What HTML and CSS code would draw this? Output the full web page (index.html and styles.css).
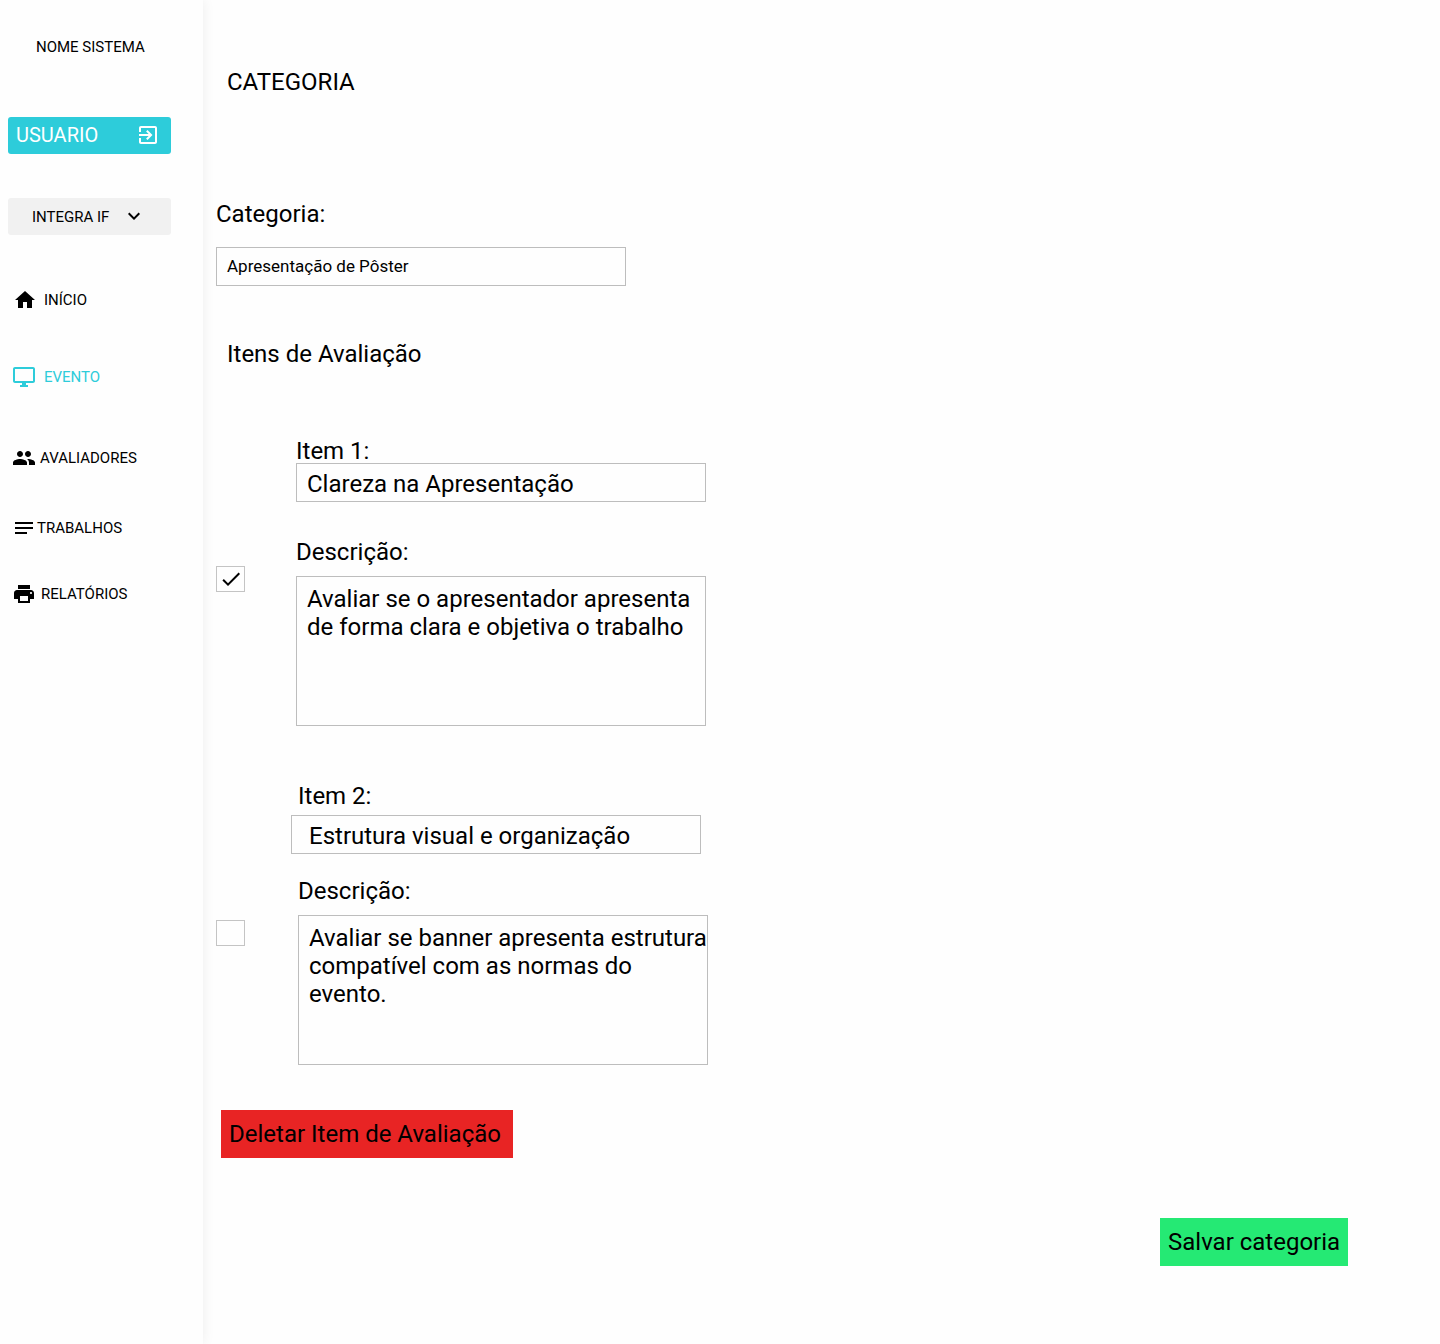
FILE: index.html
```html
<!DOCTYPE html>
<html lang="pt-BR">
<head>
<meta charset="utf-8">
<title>Categoria</title>
<link rel="stylesheet" href="styles.css">
</head>
<body>
<div class="app">
  <aside class="sidebar">
    <div class="brand"><span>NOME SISTEMA</span></div>
    <div class="user"><span class="user-name">USUARIO</span>
      <svg class="icon" viewBox="0 0 24 24"><path d="M10.09 15.59L11.5 17l5-5-5-5-1.41 1.41L12.67 11H3v2h9.67l-2.58 2.59zM19 3H5c-1.11 0-2 .9-2 2v4h2V5h14v14H5v-4H3v4c0 1.1.89 2 2 2h14c1.1 0 2-.9 2-2V5c0-1.1-.9-2-2-2z"/></svg>
    </div>
    <div class="event-select"><span>INTEGRA IF</span>
      <svg class="icon" viewBox="0 0 24 24"><path d="M16.59 8.59L12 13.17 7.41 8.59 6 10l6 6 6-6z"/></svg>
    </div>
    <nav class="menu">
      <a class="link home"><svg class="icon" viewBox="0 0 24 24"><path d="M10 20v-6h4v6h5v-8h3L12 3 2 12h3v8z"/></svg><span>INÍCIO</span></a>
      <a class="link event"><svg class="icon" viewBox="0 0 24 24"><path d="M21 2H3c-1.1 0-2 .9-2 2v12c0 1.1.9 2 2 2h7v2H8v2h8v-2h-2v-2h7c1.1 0 2-.9 2-2V4c0-1.1-.9-2-2-2zm0 14H3V4h18v12z"/></svg><span>EVENTO</span></a>
      <a class="link reviewers"><svg class="icon" viewBox="0 0 24 24"><path d="M16 11c1.66 0 2.99-1.34 2.99-3S17.66 5 16 5c-1.66 0-3 1.34-3 3s1.34 3 3 3zm-8 0c1.66 0 2.99-1.34 2.99-3S9.66 5 8 5C6.34 5 5 6.34 5 8s1.34 3 3 3zm0 2c-2.33 0-7 1.17-7 3.5V19h14v-2.5c0-2.33-4.67-3.5-7-3.5zm8 0c-.29 0-.62.02-.97.05 1.16.84 1.97 1.97 1.97 3.45V19h6v-2.5c0-2.33-4.67-3.5-7-3.5z"/></svg><span>AVALIADORES</span></a>
      <a class="link works"><svg class="icon" viewBox="0 0 24 24"><path d="M3 18h12v-2H3v2zM3 6v2h18V6H3zm0 7h18v-2H3v2z"/></svg><span>TRABALHOS</span></a>
      <a class="link reports"><svg class="icon" viewBox="0 0 24 24"><path d="M19 8H5c-1.66 0-3 1.34-3 3v6h4v4h12v-4h4v-6c0-1.66-1.34-3-3-3zm-3 11H8v-5h8v5zm3-7c-.55 0-1-.45-1-1s.45-1 1-1 1 .45 1 1-.45 1-1 1zm-1-9H6v4h12V3z"/></svg><span>RELATÓRIOS</span></a>
    </nav>
  </aside>
  <main class="content">
    <h1 class="title"><span>CATEGORIA</span></h1>
    <div class="label"><span>Categoria:</span></div>
    <div class="field category"><span>Apresentação de Pôster</span></div>
    <h2 class="subtitle"><span>Itens de Avaliação</span></h2>
    <section class="item first">
      <div class="check"><svg class="icon" viewBox="0 0 24 24"><path d="M9 16.17L4.83 12l-1.42 1.41L9 19 21 7l-1.41-1.41z"/></svg></div>
      <div class="item-body">
        <div class="label"><span>Item 1:</span></div>
        <div class="field name"><span>Clareza na Apresentação</span></div>
        <div class="label desc"><span>Descrição:</span></div>
        <div class="area">Avaliar se o apresentador apresenta<br>de forma clara e objetiva o trabalho</div>
      </div>
    </section>
    <section class="item second">
      <div class="check"></div>
      <div class="item-body">
        <div class="label"><span>Item 2:</span></div>
        <div class="field name"><span>Estrutura visual e organização</span></div>
        <div class="label desc"><span>Descrição:</span></div>
        <div class="area">Avaliar se banner apresenta estrutura<br>compatível com as normas do<br>evento.</div>
      </div>
    </section>
    <div class="btn delete"><span>Deletar Item de Avaliação</span></div>
    <div class="btn save"><span>Salvar categoria</span></div>
  </main>
</div>
</body>
</html>
```
FILE: styles.css
```css
* { box-sizing: border-box; }
body { margin: 0; background: #fefefe; color: #000; font: 24px/28px Roboto, sans-serif; }
.app { display: flex; height: 1344px; overflow: hidden; }
.icon { display: block; flex: none; width: 24px; height: 24px; fill: currentColor; }

.sidebar { flex: none; width: 203px; padding: 38px 0 0 8px; background: #fefefe; box-shadow: 0 0 12px rgba(0, 0, 0, .07); font-size: 15px; line-height: 18px; }
.brand { padding-left: 28px; }
.user, .event-select { display: flex; width: 163px; height: 37px; border-radius: 3px; }
.user { justify-content: space-between; margin-top: 61px; padding: 6px 11px 0 8px; background: #2dccda; color: #fff; }
.user-name { font-size: 20px; line-height: 24px; }
.event-select { justify-content: space-between; margin-top: 44px; padding: 6px 25px 0 24px; background: #f1f1f1; }
.event-select span { padding-top: 4px; }
.menu { display: flex; flex-direction: column; padding-top: 53px; }
.link { display: flex; align-items: center; height: 24px; padding-left: 4px; }
.home { gap: 7px; padding-left: 5px; }
.event { gap: 8px; margin-top: 53px; color: #2dccda; }
.reviewers { gap: 4px; margin-top: 57px; }
.works { gap: 1px; margin-top: 46px; }
.reports { gap: 5px; margin-top: 42px; }

.content { flex: 1; display: flex; flex-direction: column; align-items: flex-start; padding: 68px 92px 0 13px; }
.title, .subtitle { margin: 0 0 0 11px; font-size: 24px; font-weight: 400; }
.title { margin-bottom: 104px; }
.label { height: 28px; white-space: nowrap; }
.field { display: flex; width: 410px; height: 39px; padding: 6px 0 0 10px; border: 1px solid #bdbdbd; white-space: nowrap; }
.category { margin: 19px 0 54px; padding-top: 4px; font-size: 17px; }
.item { display: flex; }
.check { flex: none; width: 29px; height: 26px; padding-left: 2px; border: 1px solid #c4c4c4; }
.area { width: 410px; height: 150px; padding: 8px 0 0 10px; border: 1px solid #bdbdbd; white-space: nowrap; }
.first { margin-top: 69px; gap: 51px; }
.first .check { margin-top: 129px; }
.first .field { margin: -2px 0 36px; }
.first .area { margin-top: 10px; }
.second { margin-top: 56px; gap: 53px; }
.second .check { margin-top: 138px; }
.second .field { margin: 5px 0 23px -7px; padding-left: 17px; }
.second .area { margin-top: 10px; }
.btn { height: 48px; padding: 10px 8px 0; white-space: nowrap; }
.delete { width: 292px; margin: 45px 0 0 5px; background: #e82424; }
.save { align-self: flex-end; width: 188px; margin-top: 60px; background: #25e974; }
```
